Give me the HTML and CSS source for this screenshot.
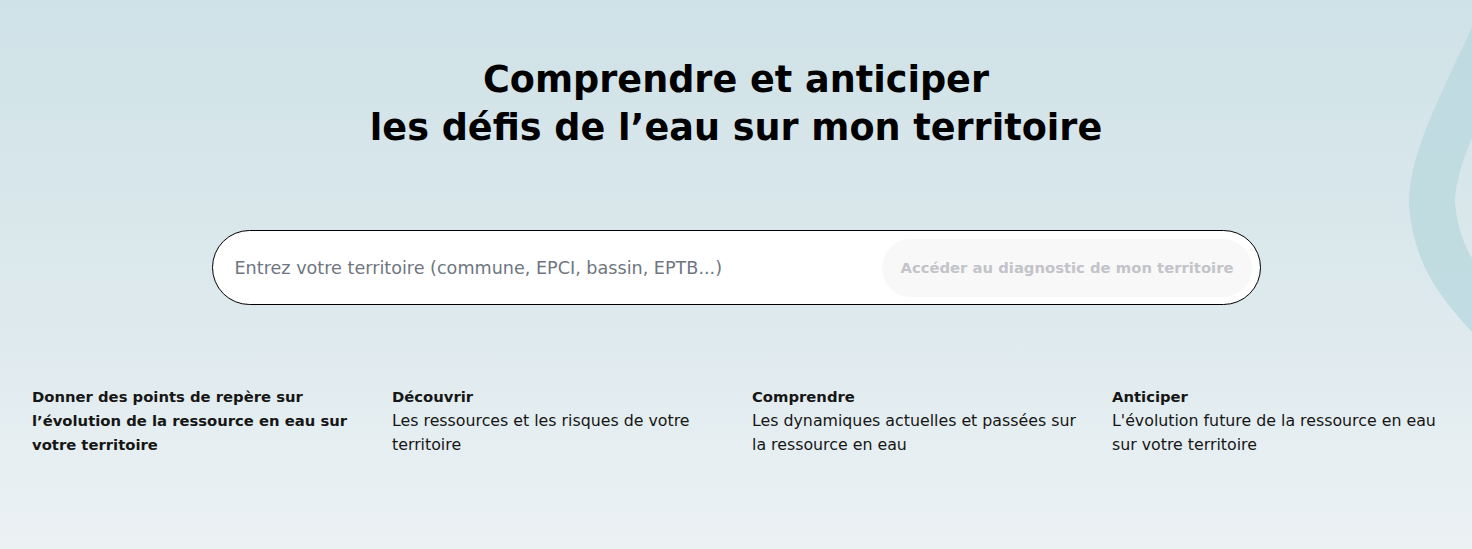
FILE: index.html
```html
<!DOCTYPE html>
<html lang="fr">
<head>
<meta charset="utf-8">
<title>Diagnostic eau</title>
<link rel="stylesheet" href="styles.css">
</head>
<body>
<div class="page">
  <svg class="wave" width="120" height="360" viewBox="0 0 120 360" aria-hidden="true">
    <path d="M 175 -40 C 130 70, 78 150, 80 205 C 84 250, 100 280, 150 330" fill="none" stroke="#bcd9df" stroke-width="46" stroke-opacity="0.85"/>
  </svg>
  <section class="hero">
    <h1 class="title">Comprendre et anticiper<br>les défis de l’eau sur mon territoire</h1>
    <form class="search">
      <input class="search-input" type="text" placeholder="Entrez votre territoire (commune, EPCI, bassin, EPTB...)">
      <button class="search-btn" type="button" disabled>Accéder au diagnostic de mon territoire</button>
    </form>
  </section>
  <section class="features">
    <div class="feature">
      <p class="feature-title">Donner des points de repère sur l’évolution de la ressource en eau sur votre territoire</p>
    </div>
    <div class="feature">
      <p class="feature-title">Découvrir</p>
      <p class="feature-text">Les ressources et les risques de votre territoire</p>
    </div>
    <div class="feature">
      <p class="feature-title">Comprendre</p>
      <p class="feature-text">Les dynamiques actuelles et passées sur la ressource en eau</p>
    </div>
    <div class="feature">
      <p class="feature-title">Anticiper</p>
      <p class="feature-text">L'évolution future de la ressource en eau sur votre territoire</p>
    </div>
  </section>
</div>
</body>
</html>
```

FILE: styles.css
```css
* { box-sizing: border-box; }
html, body { margin: 0; padding: 0; }
body {
  font-family: "DejaVu Sans", "Open Sans", sans-serif;
  color: #161616;
}
.page {
  position: relative;
  overflow: hidden;
  min-height: 549px;
  background: linear-gradient(180deg, #cfe2e7 0%, #dde9ed 55%, #ecf2f4 100%);
  padding: 56px 32px 40px;
}
.wave {
  position: absolute;
  top: 0;
  right: 0;
}
.hero {
  position: relative;
  display: flex;
  flex-direction: column;
  align-items: center;
}
.title {
  margin: 0;
  font-size: 36.6px;
  line-height: 48px;
  font-weight: 700;
  text-align: center;
  color: #000;
}
.search {
  margin-top: 78px;
  width: 1049px;
  height: 75px;
  display: flex;
  align-items: center;
  justify-content: space-between;
  background: #fff;
  border: 1px solid #000;
  border-radius: 38px;
  padding: 0 8px 0 20px;
}
.search-input {
  flex: 1;
  border: none;
  outline: none;
  background: transparent;
  font-family: inherit;
  font-size: 17.6px;
  color: #333;
}
.search-input::placeholder { color: #6f7680; }
.search-btn {
  height: 58px;
  padding: 0 18px;
  border: none;
  border-radius: 29px;
  background: #f8f8f8;
  color: #c3c3ca;
  font-family: inherit;
  font-weight: 700;
  font-size: 14.8px;
}
.features {
  position: relative;
  margin-top: 80px;
  display: grid;
  grid-template-columns: repeat(4, 1fr);
  gap: 32px;
}
.feature p {
  margin: 0;
  line-height: 24px;
}
.feature-title { font-weight: 700; font-size: 14.8px; }
.feature-text { font-weight: 400; font-size: 15.8px; }
```
